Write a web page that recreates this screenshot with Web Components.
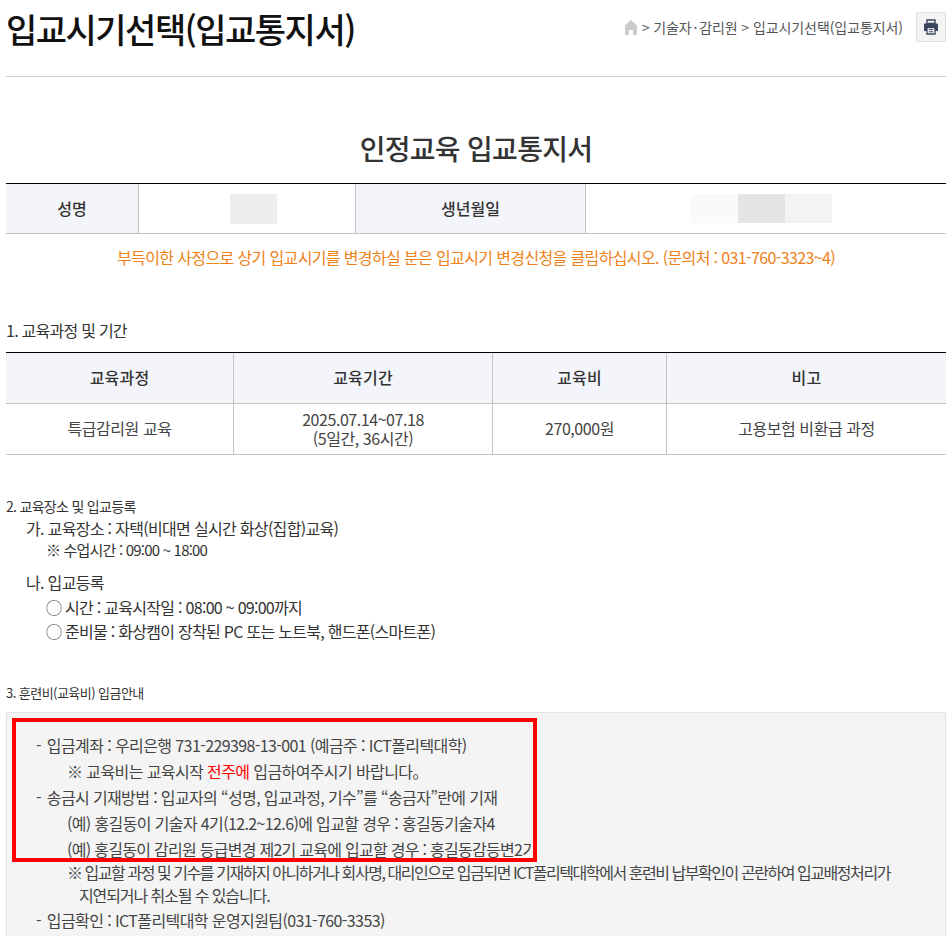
<!DOCTYPE html>
<html lang="ko">
<head>
<meta charset="utf-8">
<title>입교통지서</title>
<style>
  html { overflow: hidden; }
  body {
    margin: 0;
    padding: 0 0 0 6px;
    background: #fff;
    color: #333;
    font-family: "Noto Sans CJK KR", "Noto Sans", sans-serif;
  }
</style>
</head>
<body>
<page-head heading="입교시기선택(입교통지서)">&gt; 기술자<span style="word-spacing:-2px"> · </span>감리원 &gt; 입교시기선택(입교통지서)</page-head>
<doc-title>인정교육 입교통지서</doc-title>
<person-info></person-info>
<notice-line>부득이한 사정으로 상기 입교시기를 변경하실 분은 입교시기 변경신청을 클립하십시오. (문의처 : 031-760-3323~4)</notice-line>
<section-title style="--top:50px;--size:16px;--track:-.75px">1. 교육과정 및 기간</section-title>
<course-table></course-table>
<section-title style="--top:40px;--size:14px;--track:-.7px">2. 교육장소 및 입교등록</section-title>
<place-info></place-info>
<section-title style="--top:39px;--size:13px;--track:-.55px">3. 훈련비(교육비) 입금안내</section-title>
<pay-box>
  <pay-line>- <span style="margin-left:2px">입금계좌</span> : 우리은행 731-229398-13-001 (예금주 : ICT폴리텍대학)</pay-line>
  <pay-line indent="1">※ 교육비는 교육시작 <span style="color:#f00">전주에</span> 입금하여주시기 바랍니다。</pay-line>
  <pay-line style="--track:-.63px">- <span style="margin-left:2px">송금시</span> 기재방법 : 입교자의 “성명, 입교과정, 기수”를 “송금자”란에 기재</pay-line>
  <pay-line indent="1" style="--track:-.63px">(예) 홍길동이 기술자 4기(12.2~12.6)에 입교할 경우 : 홍길동기술자4</pay-line>
  <pay-line indent="1" style="--track:-.72px">(예) 홍길동이 감리원 등급변경 제2기 교육에 입교할 경우 : 홍길동감등변2기</pay-line>
  <pay-line indent="1" style="--lh:20px;--track:-1.45px">※ 입교할 과정 및 기수를 기재하지 아니하거나 회사명, 대리인으로 입금되면 ICT폴리텍대학에서 훈련비 납부확인이 곤란하여 입교배정처리가</pay-line>
  <pay-line indent="2" style="--track:-1.1px">지연되거나 취소될 수 있습니다.</pay-line>
  <pay-line style="--lh:24px">- <span style="margin-left:2px">입금확인</span> : ICT폴리텍대학 운영지원팀(031-760-3353)</pay-line>
</pay-box>

<script>
class PageHead extends HTMLElement {
  connectedCallback() {
    this.attachShadow({ mode: 'open' });
    this.shadowRoot.innerHTML = `
      <style>
        :host { display: flex; align-items: flex-start; justify-content: space-between; height: 76px; border-bottom: 1px solid #ccc; }
        h1 { margin: 0; font-size: 34px; line-height: 57px; font-weight: 500; letter-spacing: -1.5px; color: #111; white-space: nowrap; }
        .right { display: flex; align-items: center; margin-top: 12px; height: 30px; }
        .crumb { font-size: 14px; letter-spacing: -.08px; color: #555; display: flex; align-items: center; gap: 5px; margin-right: 13px; white-space: nowrap; }
        .print { width: 28px; height: 28px; background: #f3f3f3; border: 1px solid #e2e2e2; display: flex; align-items: center; justify-content: center; }
      </style>
      <h1>${this.getAttribute('heading')}</h1>
      <div class="right">
        <div class="crumb">
          <svg width="12" height="15" viewBox="0 0 12 15"><path d="M6 0 12 5.5V15H8V10H4v5H0V5.5z" fill="#ccc"/></svg>
          <span><slot></slot></span>
        </div>
        <div class="print">
          <svg width="16" height="16" viewBox="0 0 16 16" fill="none">
            <path d="M4 1h8v3.5H4z" stroke="#3c4560" stroke-width="1.4"/>
            <path d="M1 5.5a1 1 0 0 1 1-1h12a1 1 0 0 1 1 1V12h-3v-3H4v3H1z" fill="#3c4560"/>
            <path d="M4 8.5h8V15H4z" fill="#fff" stroke="#3c4560" stroke-width="1.3"/>
            <path d="M5.8 10.7h4.4M5.8 12.8h4.4" stroke="#3c4560"/>
          </svg>
        </div>
      </div>`;
  }
}
customElements.define('page-head', PageHead);

class DocTitle extends HTMLElement {
  connectedCallback() {
    this.attachShadow({ mode: 'open' });
    this.shadowRoot.innerHTML = `
      <style>
        :host { display: block; padding-top: 50px; height: 56px; text-align: center; font-size: 28px; line-height: 42px; font-weight: 500; letter-spacing: -.7px; color: #333; }
      </style>
      <slot></slot>`;
  }
}
customElements.define('doc-title', DocTitle);

class PersonInfo extends HTMLElement {
  connectedCallback() {
    this.attachShadow({ mode: 'open' });
    this.shadowRoot.innerHTML = `
      <style>
        :host { display: grid; grid-template-columns: 132px 1px 216px 1px 229px 1px 1fr; height: 49px; border-top: 1px solid #000; border-bottom: 1px solid #c4c4c4; font-size: 16px; font-weight: 500; color: #333; }
        .th { background: #f4f5fb; display: flex; align-items: center; justify-content: center; padding-bottom: 1px; }
        .line { background: #c4c4c4; }
        .td { display: flex; align-items: center; justify-content: center; }
        .mask { height: 30px; width: 47px; background: #eee; margin-left: 12px; }
        .mask.birth { display: flex; width: 141px; height: 29px; background: none; margin: 0 10px 0 0; }
        .birth i { flex: 1; }
      </style>
      <div class="th">성명</div><div class="line"></div>
      <div class="td"><div class="mask"></div></div><div class="line"></div>
      <div class="th">생년월일</div><div class="line"></div>
      <div class="td"><div class="mask birth"><i style="background:#fafafa"></i><i style="background:#e3e4e4"></i><i style="background:#f3f3f3"></i></div></div>`;
  }
}
customElements.define('person-info', PersonInfo);

class NoticeLine extends HTMLElement {
  connectedCallback() {
    this.attachShadow({ mode: 'open' });
    this.shadowRoot.innerHTML = `
      <style>
        :host { display: block; padding-top: 11px; text-align: center; font-size: 16px; line-height: 24px; letter-spacing: -.63px; color: #ee8118; white-space: nowrap; }
      </style>
      <slot></slot>`;
  }
}
customElements.define('notice-line', NoticeLine);

class SectionTitle extends HTMLElement {
  connectedCallback() {
    this.attachShadow({ mode: 'open' });
    this.shadowRoot.innerHTML = `
      <style>
        :host { display: block; margin-top: var(--top, 0); font-size: var(--size, 15px); line-height: 22px; letter-spacing: var(--track, -.4px); color: #333; }
      </style>
      <slot></slot>`;
  }
}
customElements.define('section-title', SectionTitle);

class CourseTable extends HTMLElement {
  connectedCallback() {
    this.attachShadow({ mode: 'open' });
    this.shadowRoot.innerHTML = `
      <style>
        :host { display: block; margin-top: 11px; font-size: 16px; color: #444; }
        .grid { display: grid; grid-template-columns: 227px 259px 174px 1fr; border-top: 1px solid #000; border-bottom: 1px solid #c4c4c4; }
        .grid > div { display: flex; align-items: center; justify-content: center; text-align: center; box-sizing: border-box; height: 50px; padding-bottom: 2px; line-height: 19px; letter-spacing: -.45px; border-left: 1px solid #c4c4c4; }
        .grid > div:nth-child(4n+1) { border-left: 0; }
        .grid > .th { background: #f4f5fb; font-weight: 500; color: #333; height: 51px; border-bottom: 1px solid #c4c4c4; letter-spacing: .2px; }
        .grid > .date { padding-bottom: 0; }
      </style>
      <div class="grid">
        <div class="th">교육과정</div><div class="th">교육기간</div><div class="th">교육비</div><div class="th">비고</div>
        <div>특급감리원 교육</div><div class="date">2025.07.14~07.18<br>(5일간, 36시간)</div><div>270,000원</div><div>고용보험 비환급 과정</div>
      </div>`;
  }
}
customElements.define('course-table', CourseTable);

class PlaceInfo extends HTMLElement {
  connectedCallback() {
    this.attachShadow({ mode: 'open' });
    this.shadowRoot.innerHTML = `
      <style>
        :host { display: block; font-size: 16px; letter-spacing: -.68px; color: #333; }
        div { white-space: nowrap; }
        .a { padding-left: 20px; height: 22px; line-height: 22px; }
        .b { padding-left: 40px; height: 22px; line-height: 22px; font-size: 15px; letter-spacing: -.8px; }
        .c { padding-left: 40px; height: 24px; line-height: 24px; letter-spacing: -.72px; }
      </style>
      <div class="a">가. 교육장소 : 자택(비대면 실시간 화상(집합)교육)</div>
      <div class="b">※ 수업시간 : 09:00 ~ 18:00</div>
      <div class="a" style="margin-top:10px">나. 입교등록</div>
      <div class="c" style="margin-top:2px">◯ 시간 : 교육시작일 : 08:00 ~ 09:00까지</div>
      <div class="c">◯ 준비물 : 화상캠이 장착된 PC 또는 노트북, 핸드폰(스마트폰)</div>`;
  }
}
customElements.define('place-info', PlaceInfo);

class PayBox extends HTMLElement {
  connectedCallback() {
    this.attachShadow({ mode: 'open' });
    this.shadowRoot.innerHTML = `
      <style>
        :host { display: block; position: relative; margin-top: 8px; padding: 19px 0 10px; background: #f4f4f4; border: 1px solid #e4e4e4; }
        .mark { position: absolute; left: 5px; top: 5px; width: 517px; height: 136px; border: 4px solid #f00; pointer-events: none; }
      </style>
      <slot></slot>
      <div class="mark"></div>`;
  }
}
customElements.define('pay-box', PayBox);

class PayLine extends HTMLElement {
  connectedCallback() {
    const indent = this.getAttribute('indent') || 0;
    const left = [29, 60, 72][indent];
    this.attachShadow({ mode: 'open' });
    this.shadowRoot.innerHTML = `
      <style>
        :host { display: block; padding-left: ${left}px; font-size: 16px; line-height: var(--lh, 26px); letter-spacing: var(--track, -.6px); color: #444; white-space: nowrap; }
      </style>
      <slot></slot>`;
  }
}
customElements.define('pay-line', PayLine);
</script>
</body>
</html>
